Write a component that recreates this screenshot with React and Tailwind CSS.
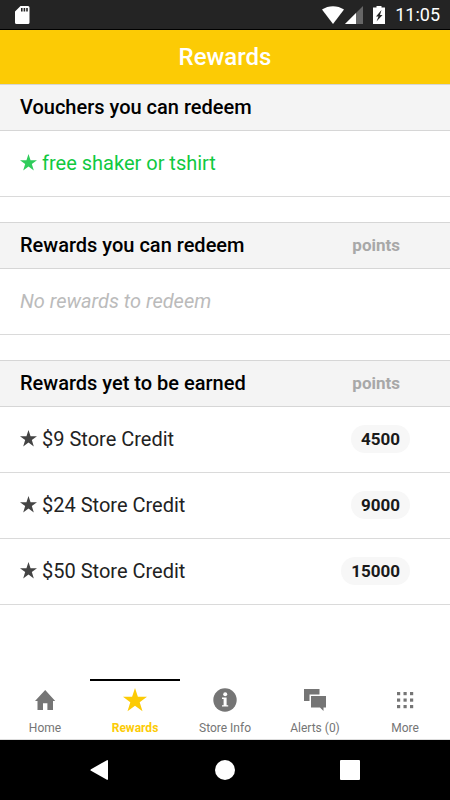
import React, { useState } from "react";

const vouchers = ["free shaker or tshirt"];

const upcoming = [
  { name: "$9 Store Credit", points: 4500 },
  { name: "$24 Store Credit", points: 9000 },
  { name: "$50 Store Credit", points: 15000 },
];

const Star = ({ className }) => (
  <svg viewBox="0 0 24 24" className={className} fill="currentColor" aria-hidden="true">
    <path d="M12 0l2.9 8.7H24l-7.3 5.5L19.5 23.3 12 17.8l-7.5 5.5 2.8-9.1L0 8.7h9.1z" />
  </svg>
);

const HomeIcon = () => (
  <svg viewBox="0 0 24 24" className="size-6" fill="currentColor" aria-hidden="true">
    <path d="M12.200 2L2 13h2.500v9H10v-6.800h4.400V22H20v-9h2.200z" />
  </svg>
);

const InfoIcon = () => (
  <svg viewBox="0 0 24 24" className="size-6" aria-hidden="true">
    <circle cx="12" cy="12" r="11.700" fill="currentColor" />
    <circle cx="12.200" cy="6.300" r="2" fill="#fff" />
    <path d="M9 9.600h4.600v7.700h1.600v1.300H9v-1.300h1.600V11H9z" fill="#fff" />
  </svg>
);

const AlertsIcon = () => (
  <svg viewBox="0 0 24 24" className="size-6" fill="currentColor" aria-hidden="true">
    <path d="M1 1h15.500v5.500h-10V13H1z" />
    <path d="M8 8h15v11.500h-2.500V23L17 19.500H8z" />
  </svg>
);

const MoreIcon = () => (
  <svg viewBox="0 0 24 24" className="size-6" fill="currentColor" aria-hidden="true">
    {[4, 10.500, 17].map((y) =>
      [4, 10.500, 17].map((x) => (
        <rect key={`${x}-${y}`} x={x} y={y} width="3.200" height="3.200" />
      )),
    )}
  </svg>
);

const tabs = [
  { label: "Home", icon: <HomeIcon /> },
  { label: "Rewards", icon: <Star className="size-6" /> },
  { label: "Store Info", icon: <InfoIcon /> },
  { label: "Alerts (0)", icon: <AlertsIcon /> },
  { label: "More", icon: <MoreIcon /> },
];

const StatusBar = () => (
  <div className="flex h-[30px] items-center justify-between border-b border-black bg-[#242424] pr-[10px] pl-[14px] text-white">
    <svg viewBox="0 0 16 20" className="h-5 w-4" aria-hidden="true">
      <path d="M6.500 1H14a1.500 1.500 0 0 1 1.500 1.500v15A1.500 1.500 0 0 1 14 19H2.500A1.500 1.500 0 0 1 1 17.500V6.500z" fill="#fff" />
      <path d="M7 3h1.600v3.500H7zM9.600 3h1.600v3.500H9.600zM12.200 3h1.600v3.500h-1.600z" fill="#242424" />
    </svg>
    <div className="flex items-center">
      <svg viewBox="0 0 24 20" className="h-5 w-6" aria-hidden="true">
        <path d="M1 4.500C7.500 0 16.500 0 23 4.500L12 19z" fill="#fff" />
      </svg>
      <svg viewBox="0 0 18 18" className="mr-[9px] h-[18px] w-[18px]" aria-hidden="true">
        <path d="M18 0v18H0z" fill="#666" />
        <path d="M11 7v11H0z" fill="#fff" />
      </svg>
      <svg viewBox="0 0 14 20" className="mr-[9px] h-5 w-[14px]" aria-hidden="true">
        <path d="M4.500 1h5v1.500H13V19H1V2.500h3.500z" fill="#fff" />
        <path d="M9.500 5L4 11.500h2.500L4.500 16.500l6-6.500H8z" fill="#242424" />
      </svg>
      <span className="text-lg leading-6">11:05</span>
    </div>
  </div>
);

const SectionHeader = ({ title, showPoints }) => (
  <div className="flex h-[47px] items-center justify-between border-y border-[#d6d6d6] bg-[#f4f4f4] pr-[50px] pb-[2px] pl-5">
    <h2 className="text-xl leading-6 font-medium text-black">{title}</h2>
    {showPoints && (
      <span className="text-[17px] leading-6 font-bold text-[#a8a8a8]">points</span>
    )}
  </div>
);

const Row = ({ children }) => (
  <li className="flex h-[66px] items-center justify-between border-b border-[#dadada] pr-10 pb-[2px] pl-5 text-xl leading-6">
    {children}
  </li>
);

const App = () => {
  const [activeTab, setActiveTab] = useState("Rewards");

  return (
    <div className="flex min-h-screen flex-col bg-white font-['Roboto',sans-serif] text-[#222]">
      <StatusBar />
      <header className="flex h-[54px] items-center justify-center bg-[#fccb05]">
        <h1 className="text-2xl font-medium text-white">Rewards</h1>
      </header>

      <main className="flex flex-1 flex-col gap-[25px]">
        <section>
          <SectionHeader title="Vouchers you can redeem" />
          <ul>
            {vouchers.map((voucher) => (
              <Row key={voucher}>
                <span className="flex items-center gap-[5px] text-[#10c93f]">
                  <Star className="size-[17px] text-[#2fcc5b]" />
                  {voucher}
                </span>
              </Row>
            ))}
          </ul>
        </section>

        <section>
          <SectionHeader title="Rewards you can redeem" showPoints />
          <ul>
            <Row>
              <em className="text-[#bbb]">No rewards to redeem</em>
            </Row>
          </ul>
        </section>

        <section>
          <SectionHeader title="Rewards yet to be earned" showPoints />
          <ul>
            {upcoming.map((reward) => (
              <Row key={reward.name}>
                <span className="flex items-center gap-[5px]">
                  <Star className="size-[17px] text-[#444]" />
                  {reward.name}
                </span>
                <span className="rounded-full bg-[#f7f7f7] px-[10px] py-[2px] text-[17px] leading-6 font-bold text-[#1a1a1a]">
                  {reward.points}
                </span>
              </Row>
            ))}
          </ul>
        </section>
      </main>

      <nav className="grid grid-cols-5 border-b border-[#ddd]">
        {tabs.map(({ label, icon }) => (
          <button
            key={label}
            type="button"
            onClick={() => setActiveTab(label)}
            className={`flex h-[60px] flex-col items-center border-t-2 pt-[7px] text-xs leading-4 ${
              activeTab === label
                ? "border-black font-bold text-[#fccb05]"
                : "border-transparent text-[#757575]"
            }`}
          >
            {icon}
            <span className="mt-2">{label}</span>
          </button>
        ))}
      </nav>

      {/* Android system buttons */}
      <div className="flex h-[60px] items-center justify-center gap-[101px] bg-black text-white">
        <button type="button" aria-label="Back">
          <svg viewBox="0 0 24 24" className="size-6" fill="currentColor">
            <path d="M20 3.200v17.600q0 1.700-1.500.8L3 12.800q-1.200-.8 0-1.600L18.500 2.400Q20 1.500 20 3.200z" />
          </svg>
        </button>
        <button type="button" aria-label="Home screen">
          <svg viewBox="0 0 24 24" className="size-6" fill="currentColor">
            <circle cx="12" cy="12" r="10" />
          </svg>
        </button>
        <button type="button" aria-label="Recent apps">
          <svg viewBox="0 0 24 24" className="size-6" fill="currentColor">
            <rect x="2" y="2" width="20" height="20" rx="1" />
          </svg>
        </button>
      </div>
    </div>
  );
};

export default App;
